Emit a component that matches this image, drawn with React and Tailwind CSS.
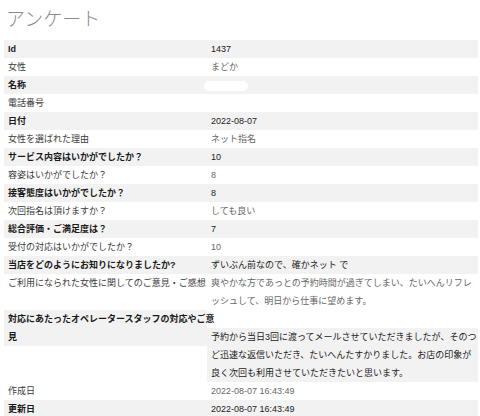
const font = '[font-family:"Liberation_Sans","Noto_Sans_CJK_JP",sans-serif]';

const rows = [
  { label: 'Id', value: '1437' },
  { label: '女性', value: 'まどか' },
  { label: '名称', value: null, pill: true },
  { label: '電話番号', value: '' },
  { label: '日付', value: '2022-08-07' },
  { label: '女性を選ばれた理由', value: 'ネット指名' },
  { label: 'サービス内容はいかがでしたか？', value: '10' },
  { label: '容姿はいかがでしたか？', value: '8' },
  { label: '接客態度はいかがでしたか？', value: '8' },
  { label: '次回指名は頂けますか？', value: 'しても良い' },
  { label: '総合評価・ご満足度は？', value: '7' },
  { label: '受付の対応はいかがでしたか？', value: '10' },
  { label: '当店をどのようにお知りになりましたか?', value: 'ずいぶん前なので、確かネット で' },
  {
    label: 'ご利用になられた女性に関してのご意見・ご感想',
    value: '爽やかな方であっとの予約時間が過ぎてしまい、たいへんリフレッシュして、明日から仕事に望めます。',
  },
  {
    label: '対応にあたったオペレータースタッフの対応やご意見',
    value:
      '予約から当日3回に渡ってメールさせていただきましたが、そのつど迅速な返信いただき、たいへんたすかりました。お店の印象が良く次回も利用させていただきたいと思います。',
    split: true,
  },
  { label: '作成日', value: '2022-08-07 16:43:49' },
  { label: '更新日', value: '2022-08-07 16:43:49' },
];

export default function App() {
  return (
    <div className={`w-[480px] h-[416px] bg-white overflow-hidden ${font}`}>
      <h1 className="h-[40px] pl-[6px] pt-[7px] text-[19px] leading-[26px] font-light text-[#8a8a8a]">
        アンケート
      </h1>

      <div className="ml-[4px] mr-[2px] grid grid-cols-[203px_1fr] text-[9px] leading-[18px]">
        {rows.map((row, i) => {
          const striped = i % 2 === 0;
          const bg = striped ? 'bg-[#f2f2f2]' : 'bg-white';
          const labelCls = striped ? 'font-bold text-[#1a1a1a]' : 'text-[#3a3a3a]';
          const valueCls = striped ? 'text-[#222]' : 'text-[#666]';

          if (row.split) {
            return (
              <div key={i} className="contents">
                <div className={`self-start pl-[4px] ${bg} ${labelCls}`}>
                  <span className="block w-[208px]">{row.label}</span>
                </div>
                <div className={`mt-[18px] pl-[4px] ${bg} ${valueCls}`}>{row.value}</div>
              </div>
            );
          }

          return (
            <div key={i} className="contents">
              <div className={`pl-[4px] min-h-[18px] whitespace-nowrap ${bg} ${labelCls}`}>
                {row.label}
              </div>
              <div className={`pl-[4px] min-h-[18px] ${bg} ${valueCls}`}>
                {row.pill ? (
                  <span className="inline-block align-middle -ml-[7px] w-[44px] h-[10px] rounded-full bg-white" />
                ) : (
                  row.value
                )}
              </div>
            </div>
          );
        })}
      </div>
    </div>
  );
}
